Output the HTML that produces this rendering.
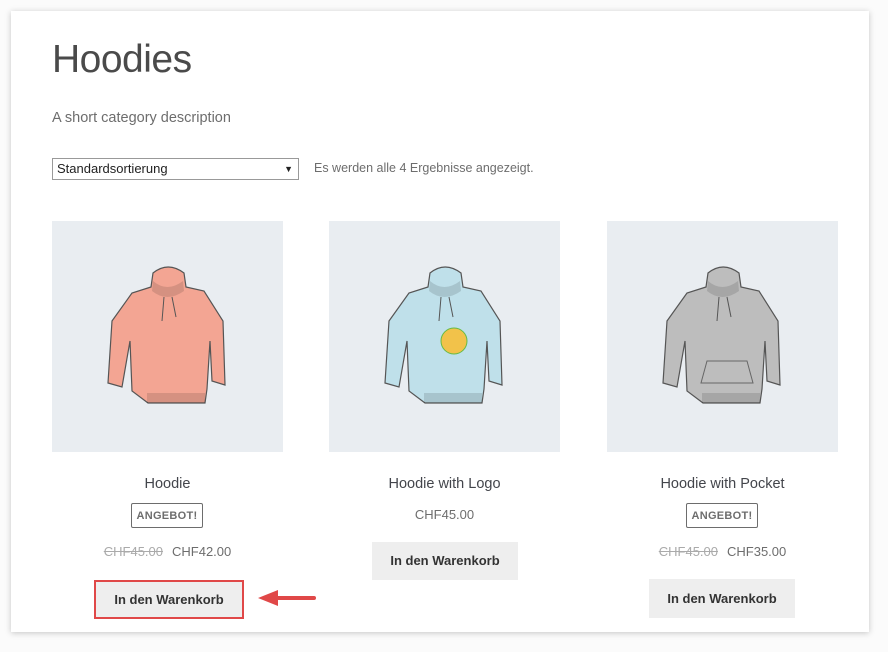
<!DOCTYPE html>
<html><head><meta charset="utf-8"><style>
body{margin:0;width:888px;height:652px;background:#fbfbfb;font-family:"Liberation Sans",sans-serif;position:relative;overflow:hidden}
.card{position:absolute;left:11px;top:11px;width:858px;height:621px;background:#fff;box-shadow:0 1px 6px rgba(0,0,0,.22)}
.a{position:absolute}
.img{position:absolute;top:221px;width:231px;height:231px;background:#e9edf1}
.name{position:absolute;top:476px;width:231px;text-align:center;font-size:14.5px;color:#43454b}
.badge{position:absolute;top:503px;height:23px;width:70px;border:1px solid #6d6d6d;border-radius:2px;font-size:11px;font-weight:bold;color:#6d6d6d;text-align:center;line-height:24px;letter-spacing:.3px}
.price{position:absolute;top:544px;width:231px;text-align:center;font-size:13px;color:#6d6d6d}
.price s{color:#aaa;margin-right:9px}
.btn{position:absolute;background:#eeeeee;font-size:13px;font-weight:bold;color:#333;text-align:center}
</style></head><body>
<div class="card"></div>
<div class="a" style="left:52px;top:38px;font-size:39px;color:#4a4a4a;letter-spacing:-0.5px">Hoodies</div>
<div class="a" style="left:52px;top:110px;font-size:14.5px;color:#6d6d6d">A short category description</div>
<div class="a" style="left:52px;top:158px;width:245px;height:20px;border:1px solid #999;font-size:13px;color:#222;line-height:20px;box-sizing:content-box"><span style="margin-left:4px">Standardsortierung</span><span style="position:absolute;right:5px;font-size:9px">▼</span></div>
<div class="a" style="left:314px;top:161px;font-size:12.5px;color:#6d6d6d">Es werden alle 4 Ergebnisse angezeigt.</div>

<svg width="0" height="0" style="position:absolute"><defs>
<g id="h">
<path d="M80 72 L60 100 L56 162 L70 166 L78 120 L80 170 L96 182 L153 182 L155 168 L158 120 L160 160 L173 164 L171 100 L152 70 L134 66 L132 52 Q116 40 101 52 L99 66 Z" stroke="#555" stroke-width="1.2"/>
<path d="M101 60 Q115 72 131 60 L132 70 Q115 82 100 70 Z" fill="rgba(0,0,0,.12)"/>
<path d="M112 76 L110 100 M120 76 L124 96" stroke="#555" fill="none"/>
<rect x="95" y="172" width="58" height="10" fill="rgba(0,0,0,.12)"/>
</g></defs></svg>
<div class="img" style="left:52px"><svg width="231" height="231"><use href="#h" fill="#f3a593"/></svg></div>
<div class="img" style="left:329px"><svg width="231" height="231"><use href="#h" fill="#bfe0ea"/><circle cx="125" cy="120" r="13" fill="#f2c24a" stroke="#6b4"/></svg></div>
<div class="img" style="left:607px"><svg width="231" height="231"><use href="#h" fill="#bdbdbd"/><path d="M100 140 L140 140 L146 162 L94 162 Z" fill="none" stroke="#666"/></svg></div>

<div class="name" style="left:52px">Hoodie</div>
<div class="name" style="left:329px">Hoodie with Logo</div>
<div class="name" style="left:607px">Hoodie with Pocket</div>
<div class="badge" style="left:131px">ANGEBOT!</div>
<div class="badge" style="left:686px">ANGEBOT!</div>
<div class="price" style="left:52px"><s>CHF45.00</s>CHF42.00</div>
<div class="price" style="left:329px;top:507px">CHF45.00</div>
<div class="price" style="left:607px"><s>CHF45.00</s>CHF35.00</div>
<div class="btn" style="left:94px;top:580px;border:2px solid #e04848;box-sizing:content-box;width:146px;height:35px;line-height:35px">In den Warenkorb</div>
<div class="btn" style="left:372px;top:542px;width:146px;height:38px;line-height:38px">In den Warenkorb</div>
<div class="btn" style="left:649px;top:579px;width:146px;height:39px;line-height:39px">In den Warenkorb</div>
<svg class="a" style="left:254px;top:586px" width="64" height="24"><path d="M60 12 L22 12" stroke="#e04848" stroke-width="4" stroke-linecap="round"/><path d="M4 12 L24 4 L24 20 Z" fill="#e04848"/></svg>
</body></html>
